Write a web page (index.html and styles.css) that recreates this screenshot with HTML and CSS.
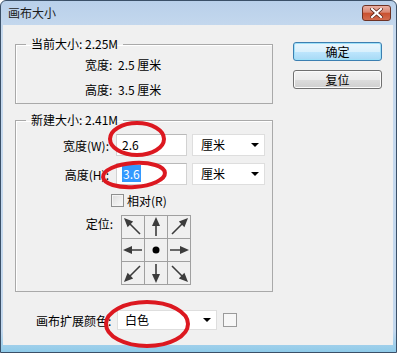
FILE: index.html
```html
<!DOCTYPE html>
<html lang="zh-CN">
<head>
    <meta charset="UTF-8">
    <title>画布大小</title>
    <link rel="stylesheet" href="styles.css">
</head>
<body>
    <div class="window">
        <div class="titlebar">
            <span class="title">画布大小</span>
            <span class="close">
                <svg width="13" height="10" viewBox="0 0 13 10">
                    <path d="M2 1 L11 9 M11 1 L2 9" stroke="#5a2418" stroke-width="3.6" stroke-linecap="square"/>
                    <path d="M2 1 L11 9 M11 1 L2 9" stroke="#fff" stroke-width="2.2" stroke-linecap="square"/>
                </svg>
            </span>
        </div>
        <div class="client">
            <div class="main">
                <fieldset class="group current">
                    <legend>当前大小: 2.25M</legend>
                    <div class="info-row"><span class="info-label">宽度:</span><span>2.5 厘米</span></div>
                    <div class="info-row"><span class="info-label">高度:</span><span>3.5 厘米</span></div>
                </fieldset>
                <fieldset class="group new">
                    <legend>新建大小: 2.41M</legend>
                    <div class="field-row">
                        <span class="field-label">宽度(W):</span>
                        <div class="edit">2.6</div>
                        <div class="combo">厘米<i class="arrow"></i></div>
                    </div>
                    <div class="field-row second">
                        <span class="field-label">高度(H):</span>
                        <div class="edit"><span class="selected">3.6</span></div>
                        <div class="combo">厘米<i class="arrow"></i></div>
                    </div>
                    <div class="check-row">
                        <span class="checkbox"></span>
                        <span>相对(R)</span>
                    </div>
                    <div class="anchor-row">
                        <span class="anchor-label">定位:</span>
                        <svg class="anchor-grid" width="70" height="70" viewBox="0 0 70 70">
                            <rect x="0.5" y="0.5" width="69" height="69" fill="none" stroke="#a0a0a0"/>
                            <path d="M23.5 0 V70 M46.5 0 V70 M0 23.5 H70 M0 46.5 H70" stroke="#a0a0a0"/>
                            <g stroke="#3c3c3c" stroke-width="1.6" fill="none">
                                <path d="M35 9 V21"/>
                                <path d="M35 49 V61"/>
                                <path d="M9 35 H21"/>
                                <path d="M49 35 H61"/>
                                <path d="M8 8 L19 19"/>
                                <path d="M62 8 L51 19"/>
                                <path d="M8 62 L19 51"/>
                                <path d="M62 62 L51 51"/>
                            </g>
                            <g fill="#3c3c3c">
                                <polygon points="35,2 31,11 39,11"/>
                                <polygon points="35,68 31,59 39,59"/>
                                <polygon points="2,35 11,31 11,39"/>
                                <polygon points="68,35 59,31 59,39"/>
                                <polygon points="3,3 12.2,6.6 6.6,12.2"/>
                                <polygon points="67,3 63.4,12.2 57.8,6.6"/>
                                <polygon points="3,67 6.6,57.8 12.2,63.4"/>
                                <polygon points="67,67 63.4,57.8 57.8,63.4"/>
                                <circle cx="35" cy="35" r="3.5" fill="#000"/>
                            </g>
                        </svg>
                    </div>
                </fieldset>
                <div class="ext-row">
                    <span class="ext-label">画布扩展颜色:</span>
                    <div class="combo wide">白色<i class="arrow"></i></div>
                    <span class="swatch"></span>
                </div>
            </div>
            <div class="side">
                <button class="btn default">确定</button>
                <button class="btn">复位</button>
            </div>
        </div>
        <!-- red marks drawn over the screenshot -->
        <svg class="marks" width="397" height="353" viewBox="0 0 397 353">
            <g fill="none" stroke="#dc1820" stroke-width="4">
                <ellipse cx="137" cy="139" rx="27" ry="16"/>
                <ellipse cx="134" cy="175" rx="31" ry="12" transform="rotate(-4 134 175)"/>
                <ellipse cx="147" cy="324" rx="41" ry="22"/>
            </g>
        </svg>
    </div>
</body>
</html>
```

FILE: styles.css
```css
body {
    margin: 0;
    font-family: "Noto Sans CJK SC", "Noto Sans", sans-serif;
    font-size: 12px;
    color: #000;
}

.window {
    position: relative;
    width: 397px;
    height: 353px;
    box-sizing: border-box;
    border: 1px solid #3b5068;
    border-radius: 6px 6px 0 0;
    background: linear-gradient(#b9d0ea, #c6d9ee 30px, #c3d8ee 330px, #8fcbe9);
    display: flex;
    flex-direction: column;
    overflow: hidden;
}

.titlebar {
    height: 24px;
    display: flex;
    align-items: flex-start;
    padding: 0 5px 0 7px;
}

.title {
    margin-top: 4px;
    line-height: 16px;
    font-size: 12px;
    color: #1b1b1b;
}

.close {
    margin-left: auto;
    margin-top: 4px;
    width: 29px;
    height: 16px;
    box-sizing: border-box;
    border: 1px solid #6e3224;
    border-radius: 3px;
    background: linear-gradient(#eab0a3, #d98772 45%, #c9502f 50%, #d26d4f);
    display: flex;
    align-items: center;
    justify-content: center;
}

.client {
    flex: 1;
    margin: 0 3px 7px 2px;
    background: #f0f0f0;
    display: flex;
    align-items: flex-start;
    padding: 11px 0 0 12px;
}

.main {
    width: 258px;
}

.group {
    margin: 0;
    width: 258px;
    box-sizing: border-box;
    border: 1px solid #a9a9a9;
    box-shadow: inset 1px 1px 0 #fff;
    padding: 0 0 1px 0;
    min-inline-size: 0;
}

.group legend {
    margin-left: 10px;
    padding: 0 5px;
    line-height: 16px;
}

.current {
    margin-bottom: 8px;
}

.info-row {
    height: 25px;
    line-height: 25px;
    padding-left: 69px;
    display: flex;
}

.info-label {
    width: 33px;
}

.new {
    padding-bottom: 6px;
}

.field-row {
    display: flex;
    align-items: center;
    margin-top: 6px;
    height: 22px;
}

.field-row.second {
    margin-top: 7px;
}

.field-label {
    width: 100px;
    box-sizing: border-box;
    text-align: right;
    padding-right: 7px;
}

.edit {
    width: 71px;
    height: 22px;
    box-sizing: border-box;
    background: #fff;
    border: 1px solid #d2d2d2;
    border-top-color: #b9b9b9;
    padding-left: 5px;
    line-height: 20px;
}

.selected {
    background: #3399ff;
    color: #fff;
    padding: 0 1px;
}

.combo {
    margin-left: 5px;
    width: 73px;
    height: 22px;
    box-sizing: border-box;
    background: #fff;
    border: 1px solid #dedede;
    padding: 0 5px 0 8px;
    line-height: 20px;
    display: flex;
    align-items: center;
}

.arrow {
    margin-left: auto;
    width: 0;
    height: 0;
    border-left: 4px solid transparent;
    border-right: 4px solid transparent;
    border-top: 4px solid #000;
}

.check-row {
    display: flex;
    align-items: center;
    margin-top: 9px;
    height: 13px;
    padding-left: 95px;
    line-height: 13px;
}

.checkbox {
    width: 13px;
    height: 13px;
    box-sizing: border-box;
    border: 1px solid #8e8f8f;
    background: linear-gradient(135deg, #dcdcdc, #fbfbfb);
    box-shadow: inset 0 0 0 1px #f4f4f4;
    margin-right: 3px;
}

.anchor-row {
    display: flex;
    align-items: flex-start;
    margin-top: 8px;
}

.anchor-label {
    width: 97px;
    text-align: right;
    line-height: 16px;
    margin-top: 1px;
}

.anchor-grid {
    display: block;
    margin-left: 8px;
}

.ext-row {
    display: flex;
    align-items: center;
    margin-top: 18px;
    padding-left: 21px;
}

.ext-label {
    white-space: nowrap;
    width: 80px;
    flex-shrink: 0;
}

.combo.wide {
    margin-left: 1px;
    width: 100px;
    height: 20px;
    line-height: 18px;
    padding-left: 7px;
}

.swatch {
    margin-left: 6px;
    width: 14px;
    height: 14px;
    box-sizing: border-box;
    border: 1px solid #9a9a9a;
    background: #f7f7f7;
}

.side {
    margin-left: 20px;
    margin-top: 6px;
    display: flex;
    flex-direction: column;
    gap: 9px;
}

.btn {
    width: 89px;
    height: 19px;
    padding: 0;
    font: inherit;
    line-height: 17px;
    color: #000;
    border: 1px solid #707070;
    border-radius: 3px;
    background: linear-gradient(#f3f3f3, #ebebeb 50%, #dddddd 50%, #cfcfcf);
    box-shadow: inset 0 0 0 1px #fbfbfb;
}

.btn.default {
    border-color: #3c7fb1;
    background: linear-gradient(#eaf6fd, #d9f0fc 50%, #bee6fd 50%, #a7d9f5);
    box-shadow: inset 0 0 0 1px #9ee0f8;
}

.marks {
    position: absolute;
    top: -1px;
    left: -1px;
    pointer-events: none;
}
```
